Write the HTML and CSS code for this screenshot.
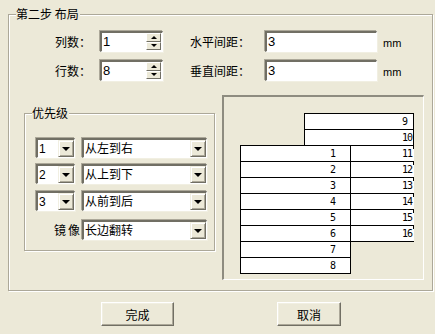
FILE: index.html
```html
<!DOCTYPE html>
<html>
<head>
<meta charset="utf-8">
<link rel="stylesheet" href="styles.css">
</head>
<body>
<div class="dialog">
  <div class="group outer">
    <span class="group-title">第二步 布局</span>
    <div class="field-row row1">
      <span class="lbl lbl-short">列数：</span>
      <div class="input spin-input"><span class="val">1</span>
        <div class="spin"><span class="spin-btn"><i class="up"></i></span><span class="spin-btn"><i class="down"></i></span></div>
      </div>
      <span class="lbl lbl-long">水平间距：</span>
      <div class="input wide"><span class="val">3</span></div>
      <span class="unit">mm</span>
    </div>
    <div class="field-row row2">
      <span class="lbl lbl-short">行数：</span>
      <div class="input spin-input"><span class="val">8</span>
        <div class="spin"><span class="spin-btn"><i class="up"></i></span><span class="spin-btn"><i class="down"></i></span></div>
      </div>
      <span class="lbl lbl-long">垂直间距：</span>
      <div class="input wide"><span class="val">3</span></div>
      <span class="unit">mm</span>
    </div>
    <div class="lower">
      <div class="group prio">
        <span class="group-title">优先级</span>
        <div class="combo-row r1">
          <div class="combo small"><span class="val">1</span><span class="drop"><i></i></span></div>
          <div class="combo big"><span class="val">从左到右</span><span class="drop"><i></i></span></div>
        </div>
        <div class="combo-row r2">
          <div class="combo small"><span class="val">2</span><span class="drop"><i></i></span></div>
          <div class="combo big"><span class="val">从上到下</span><span class="drop"><i></i></span></div>
        </div>
        <div class="combo-row r3">
          <div class="combo small"><span class="val">3</span><span class="drop"><i></i></span></div>
          <div class="combo big"><span class="val">从前到后</span><span class="drop"><i></i></span></div>
        </div>
        <div class="combo-row r4">
          <span class="mirror-lbl">镜像</span>
          <div class="combo big"><span class="val">长边翻转</span><span class="drop"><i></i></span></div>
        </div>
      </div>
      <div class="preview">
        <div class="layer back">
          <div class="cell">9</div>
          <div class="cell">10</div>
          <div class="cell part">11</div>
          <div class="cell part">12</div>
          <div class="cell part">13</div>
          <div class="cell part">14</div>
          <div class="cell part">15</div>
          <div class="cell part">16</div>
        </div>
        <div class="layer front">
          <div class="cell">1</div>
          <div class="cell">2</div>
          <div class="cell">3</div>
          <div class="cell">4</div>
          <div class="cell">5</div>
          <div class="cell">6</div>
          <div class="cell">7</div>
          <div class="cell">8</div>
        </div>
      </div>
    </div>
  </div>
  <div class="buttons">
    <button class="btn ok">完成</button>
    <button class="btn cancel">取消</button>
  </div>
</div>
</body>
</html>
```
FILE: styles.css
```css
* { box-sizing: border-box; }
html, body {
  margin: 0;
  padding: 0;
  background: #ECE9D8;
}
body {
  width: 435px;
  height: 334px;
  overflow: hidden;
  font-family: "Liberation Sans", "Noto Sans CJK SC", sans-serif;
  font-size: 12px;
  color: #000;
}
.dialog {
  padding-top: 14px;
  padding-left: 8px;
}
.group {
  position: relative;
  border: 1px solid #ACA899;
  box-shadow: inset 1px 1px 0 #fff, 1px 1px 0 #fff;
}
.outer {
  width: 425px;
  height: 277px;
}
.group-title {
  position: absolute;
  top: -9px;
  left: 7px;
  padding: 0 1px 0 0;
  background: #ECE9D8;
  line-height: 16px;
  font-family: "Noto Sans CJK SC", sans-serif;
}
.field-row {
  display: flex;
  align-items: center;
  height: 21px;
}
.row1 { margin-top: 16px; }
.row2 { margin-top: 8px; }
.lbl {
  font-family: "Noto Sans CJK SC", sans-serif;
  line-height: 16px;
  white-space: nowrap;
}
.lbl-short { margin-left: 46px; width: 36px; }
.lbl-long { margin-left: 27px; width: 60px; }
.input {
  position: relative;
  height: 21px;
  background: #fff;
  border-style: solid;
  border-width: 2px 1px 1px 2px;
  border-color: #716F64 #fff #fff #716F64;
  box-shadow: -1px -1px 0 #ACA899, 1px 1px 0 #F1EFE2;
  display: flex;
  align-items: center;
}
.spin-input { margin-left: 9px; width: 63px; }
.wide { margin-left: 15px; width: 112px; }
.val {
  padding-left: 1px;
  line-height: 14px;
  white-space: nowrap;
}
.input .val { font-size: 13px; padding-left: 1px; }
.unit {
  margin-left: 6px;
  font-size: 11px;
  margin-top: 2px;
}
.spin {
  position: absolute;
  right: 1px;
  top: 0;
  width: 15px;
  height: 17px;
  display: flex;
  flex-direction: column;
}
.spin-btn {
  flex: 1;
  background: #ECE9D8;
  border-style: solid;
  border-width: 1px;
  border-color: #fff #716F64 #716F64 #fff;
  display: flex;
  align-items: center;
  justify-content: center;
}
.spin-btn i {
  width: 0;
  height: 0;
  border-left: 3px solid transparent;
  border-right: 3px solid transparent;
}
.spin-btn i.up { border-bottom: 3px solid #000; }
.spin-btn i.down { border-top: 3px solid #000; }

.lower {
  display: flex;
  align-items: flex-start;
  margin-top: 14px;
}
.prio {
  margin-top: 18px;
  margin-left: 15px;
  width: 191px;
  height: 138px;
}
.combo-row {
  display: flex;
  align-items: center;
  padding-left: 11px;
}
.r1 { margin-top: 24px; }
.r2 { margin-top: 6px; }
.r3 { margin-top: 7px; }
.r4 { margin-top: 9px; }
.combo {
  position: relative;
  height: 20px;
  background: #fff;
  border-style: solid;
  border-width: 2px 1px 1px 2px;
  border-color: #716F64 #fff #fff #716F64;
  box-shadow: -1px -1px 0 #ACA899, 1px 1px 0 #F1EFE2;
  display: flex;
  align-items: center;
}
.combo .val {
  font-size: 12px;
  line-height: 16px;
}
.combo.small { width: 39px; }
.combo.big { width: 125px; margin-left: 7px; }
.drop {
  position: absolute;
  right: 0;
  top: 0;
  width: 16px;
  height: 17px;
  background: #ECE9D8;
  border-style: solid;
  border-width: 1px;
  border-color: #F1EFE2 #716F64 #716F64 #F1EFE2;
  box-shadow: inset 1px 1px 0 #fff, inset -1px -1px 0 #ACA899;
  display: flex;
  align-items: center;
  justify-content: center;
}
.drop i {
  width: 0;
  height: 0;
  border-left: 4px solid transparent;
  border-right: 4px solid transparent;
  border-top: 4px solid #000;
  margin-top: 1px;
}
.mirror-lbl {
  display: block;
  width: 46px;
  text-align: right;
  letter-spacing: 2px;
  font-family: "Noto Sans CJK SC", sans-serif;
  line-height: 16px;
  white-space: nowrap;
}
.r4 .combo.big { margin-left: 0; }

.preview {
  position: relative;
  margin-left: 7px;
  width: 202px;
  height: 185px;
  border-style: solid;
  border-width: 2px 1px 1px 2px;
  border-color: #8E8C80 #fff #fff #8E8C80;
}
.layer {
  position: absolute;
  display: flex;
  flex-direction: column;
}
.back { left: 80px; top: 16px; width: 110px; }
.front { left: 16px; top: 48px; width: 111px; }
.cell {
  position: relative;
  height: 17px;
  margin-top: -1px;
  border: 1px solid #000;
  background: #fff;
  font-family: "DejaVu Sans Mono", monospace;
  font-size: 10px;
  line-height: 15px;
  white-space: nowrap;
}
.cell:first-child { margin-top: 0; }
.back .cell { padding-left: 97px; letter-spacing: -1px; }
.back .cell.part { border-right: none; }
.back .cell.part::after {
  content: "";
  position: absolute;
  right: 0;
  top: 0;
  width: 1px;
  height: 3px;
  background: #000;
}
.front .cell { padding-left: 89px; }

.buttons {
  display: flex;
  margin-top: 11px;
  padding-left: 93px;
}
.btn {
  height: 24px;
  background: #ECE9D8;
  font-family: "Noto Sans CJK SC", sans-serif;
  font-size: 12px;
  color: #000;
  padding: 0;
  border-style: solid;
  border-width: 1px;
  border-color: #fff #716F64 #716F64 #fff;
  box-shadow: inset -1px -1px 0 #ACA899, inset 1px 1px 0 #F1EFE2;
}
.ok { width: 73px; }
.cancel { width: 64px; margin-left: 103px; }
```
